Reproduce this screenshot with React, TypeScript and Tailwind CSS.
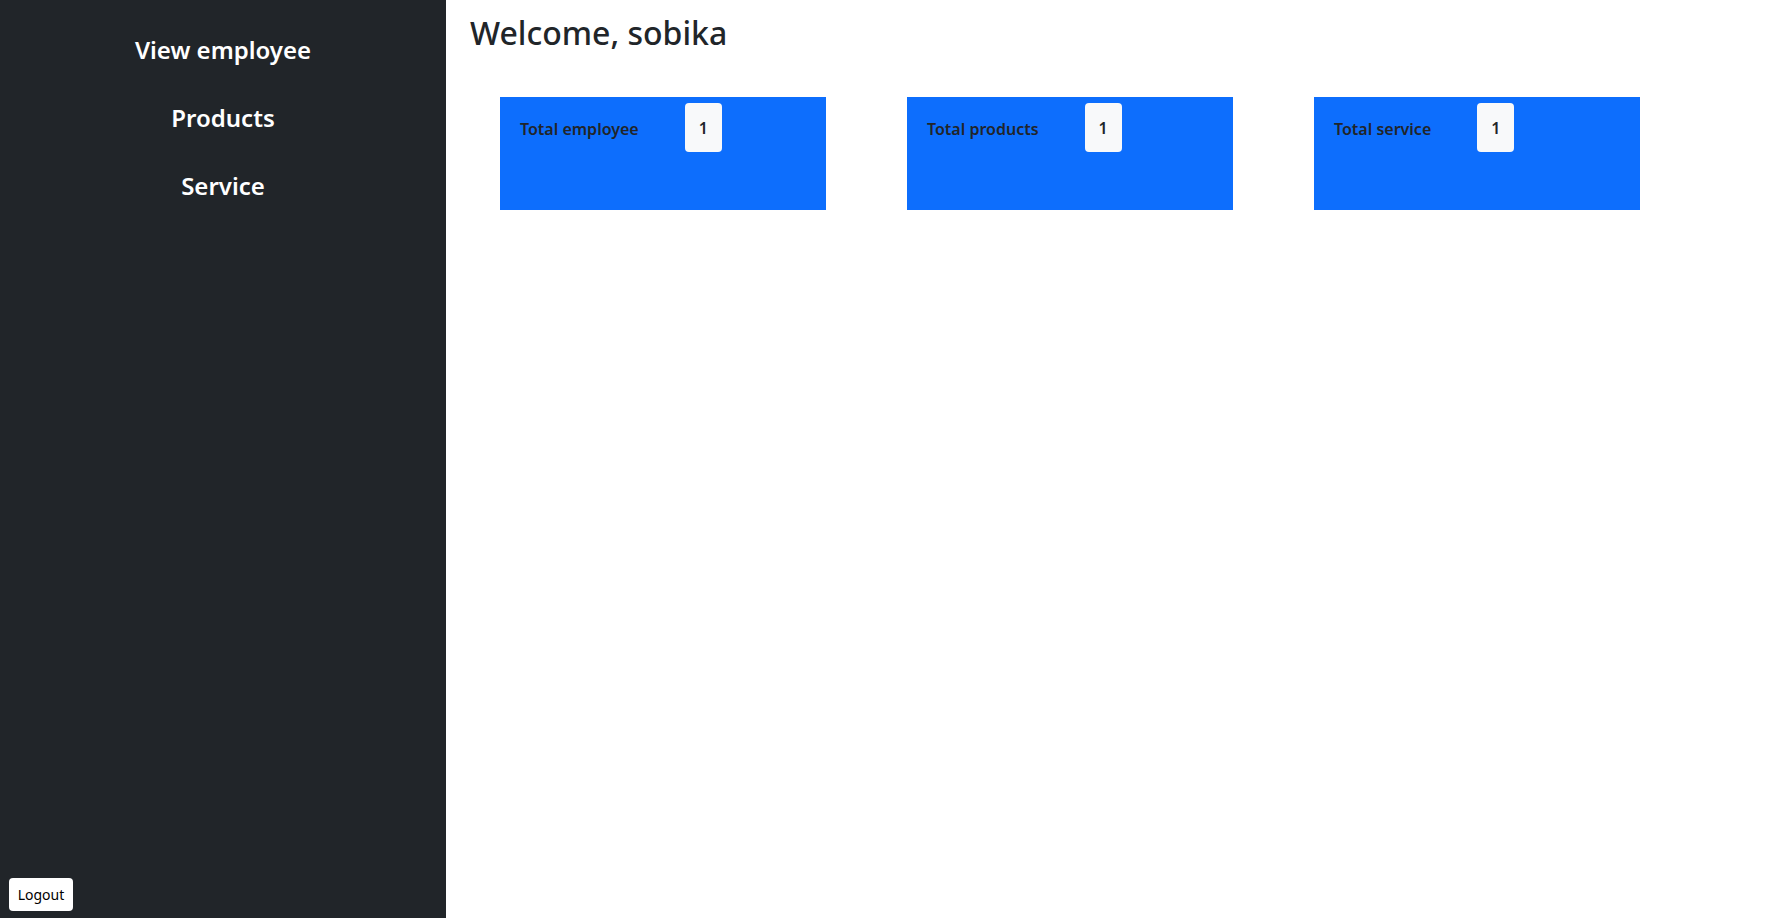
import React from 'react';

const stats = [
  { label: 'Total employee', count: 1 },
  { label: 'Total products', count: 1 },
  { label: 'Total service', count: 1 },
];

const navItems = ['View employee', 'Products', 'Service'];

const App: React.FC = () => {
  return (
    <div className="flex h-screen w-full bg-white text-[#212529] font-['Noto_Sans',sans-serif]">
      <aside className="flex w-[446px] flex-none flex-col justify-between bg-[#212529]">
        <nav className="flex flex-col items-center gap-[39px] pt-[36px]">
          {navItems.map((item) => (
            <a key={item} href="#" className="text-[24px] font-semibold leading-[1.2] text-white">
              {item}
            </a>
          ))}
        </nav>
        <div className="pb-[7px] pl-[9px]">
          <button className="h-[33px] w-[64px] rounded-[4px] bg-white text-[14px] text-black">Logout</button>
        </div>
      </aside>
      <main className="flex-1 pl-[24px] pt-[14px]">
        <h2 className="text-[32px] font-medium leading-[1.2]">Welcome, sobika</h2>
        <div className="mt-[45px] flex gap-[81px] pl-[30px]">
          {stats.map((s) => (
            <div key={s.label} className="h-[113px] w-[326px] bg-[#0d6efd] px-[20px] pt-[6px]">
              <div className="flex items-center gap-[46px]">
                <span className="pt-[3px] text-[16px] font-semibold">{s.label}</span>
                <span className="flex h-[49px] w-[37px] items-center justify-center rounded-[4px] bg-[#f8f9fa] text-[16px] font-semibold">
                  {s.count}
                </span>
              </div>
            </div>
          ))}
        </div>
      </main>
    </div>
  );
};

export default App;
